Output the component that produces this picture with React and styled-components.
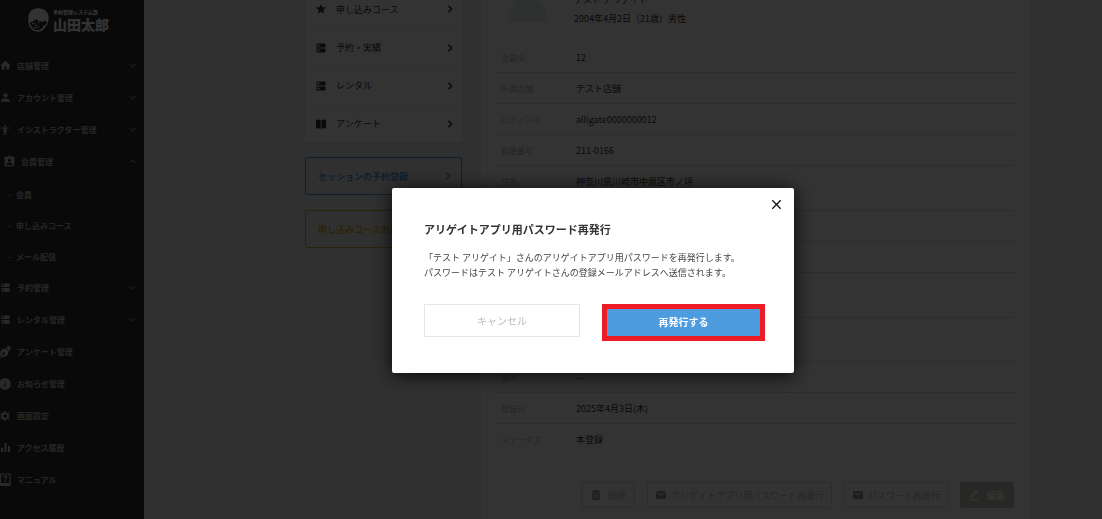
import React from "react";
import styled, { createGlobalStyle, css } from "styled-components";
import {
  MdHome,
  MdPerson,
  MdAccessibility,
  MdAssignmentInd,
  MdDns,
  MdInfo,
  MdSettings,
  MdEmail,
  MdStar,
} from "react-icons/md";
import { FaPenNib, FaTrashAlt } from "react-icons/fa";

const GlobalStyle = createGlobalStyle`
  *, *::before, *::after { box-sizing: border-box; }
  body {
    margin: 0;
    overflow: hidden;
    background: #f0f0f0;
    color: #333;
    font-family: "Noto Sans CJK JP", sans-serif;
    font-size: 9px;
  }
  button { font-family: inherit; cursor: pointer; }
  a { color: inherit; text-decoration: none; }
  ul { list-style: none; margin: 0; padding: 0; }
  svg { display: block; flex: none; }
`;

const Page = styled.div`
  display: flex;
  height: 100vh;
  overflow: hidden;
`;

/* ---------- sidebar ---------- */

const Sidebar = styled.aside`
  flex: 0 0 144px;
  background: #303030;
  color: #ccc;
`;

const Logo = styled.a`
  display: flex;
  align-items: center;
  gap: 4px;
  height: 50px;
  padding: 0 0 10px 28px;
  color: #fff;
`;

const LogoText = styled.span`
  display: flex;
  flex-direction: column;
  font-weight: 900;
`;

const LogoSmall = styled.span`
  font-size: 5px;
  line-height: 8px;
`;

const LogoLarge = styled.span`
  font-size: 14px;
  line-height: 17px;
`;

const MenuItem = styled.a`
  display: flex;
  align-items: center;
  gap: 7px;
  height: 32px;
  padding: 0 8px 0 ${(p) => (p.$open ? 4 : 0)}px;
  border-bottom: 1px solid #3a3a3a;
  font-size: 8px;
  font-weight: 700;
`;

const MenuIcon = styled.span`
  display: flex;
  justify-content: center;
  width: 10px;
`;

const MenuLabel = styled.span`
  flex: 1;
  color: #bbb;
`;

const MenuChevron = styled.span`
  color: #999;
`;

const SubMenu = styled.ul`
  padding-top: 1px;
`;

const SubItem = styled.a`
  display: flex;
  align-items: center;
  gap: 5px;
  height: 31px;
  padding-left: 8px;
  border-bottom: 1px solid #3a3a3a;
  color: #bbb;
  font-size: 8px;
  font-weight: 700;
`;

/* ---------- main columns ---------- */

const Main = styled.main`
  flex: 1;
  min-width: 0;
  display: flex;
  align-items: flex-start;
  gap: 19px;
  margin-top: -10px;
  padding: 0 73px 0 161px;
`;

const SideColumn = styled.div`
  flex: 0 0 157px;
  display: flex;
  flex-direction: column;
  gap: 15px;
`;

const NavCard = styled.nav`
  background: #fff;
  box-shadow: 0 1px 2px rgba(0, 0, 0, 0.06);
`;

const NavRow = styled.a`
  display: flex;
  align-items: center;
  gap: 9px;
  height: 38px;
  padding: 0 8px 0 10px;
  font-size: 9px;

  & + & {
    border-top: 1px solid #f2f2f2;
  }
`;

const NavLabel = styled.span`
  flex: 1;
`;

const ActionLink = styled.a`
  display: flex;
  align-items: center;
  justify-content: space-between;
  height: 38px;
  padding: 0 9px 0 12px;
  border: 1px solid ${(p) => p.$color};
  border-radius: 2px;
  color: ${(p) => p.$color};
  font-size: 9px;
  font-weight: 700;
`;

const DetailCard = styled.section`
  flex: 1;
  min-width: 0;
  min-height: 560px;
  padding: 0 15px;
  background: #fff;
`;

const Profile = styled.header`
  display: flex;
  gap: 27px;
  padding: 0 0 14px 12px;
  line-height: 19px;
`;

const Avatar = styled.div`
  width: 39px;
  height: 25px;
  margin-top: 7px;
  border-radius: 20px 20px 2px 2px;
  background: #ecf4f4;
`;

const ProfileLine = styled.div`
  font-size: 9px;
`;

const DetailTable = styled.table`
  width: 100%;
  border-collapse: separate;
  border-spacing: 0;
  line-height: 13px;
`;

const cell = css`
  height: ${(p) => p.$height || 31}px;
  padding: 9px 5px 8px;
  border-bottom: 1px solid ${(p) => (p.$last ? "transparent" : "#dcdcdc")};
  text-align: left;
  vertical-align: top;
`;

const LabelCell = styled.th`
  ${cell}
  width: 75px;
  color: #b8b8b8;
  font-size: 8px;
  font-weight: 400;
`;

const ValueCell = styled.td`
  ${cell}
  font-size: 9px;
`;

const ButtonBar = styled.div`
  display: flex;
  justify-content: flex-end;
  gap: 12px;
  padding-top: 27px;
`;

const BarButton = styled.button`
  display: flex;
  align-items: center;
  justify-content: center;
  gap: ${(p) => (p.$compact ? 4 : 7)}px;
  min-width: 54px;
  height: 26px;
  padding: 0 7px;
  border: 1px solid ${(p) => (p.$filled ? "#c4c2b8" : "#dcdcdc")};
  border-radius: 2px;
  background: ${(p) => (p.$filled ? "#c4c2b8" : "#fff")};
  color: ${(p) => (p.$filled ? "#fff" : "#bbb")};
  font-size: 9px;
  font-weight: ${(p) => (p.$filled ? 700 : 400)};
  white-space: nowrap;

  svg {
    color: ${(p) => (p.$filled ? "#fff" : "#92969e")};
  }
`;

/* ---------- dialog ---------- */

const Overlay = styled.div`
  position: fixed;
  inset: 0;
  display: flex;
  align-items: center;
  justify-content: center;
  padding: 42px 0 0 84px;
  background: rgba(0, 0, 0, 0.8);
`;

const Dialog = styled.div`
  display: flex;
  flex-direction: column;
  width: 402px;
  padding: 11px 29px 32px 32px;
  border-radius: 2px;
  background: #fff;
  box-shadow: 0 2px 20px rgba(0, 0, 0, 0.9);
`;

const CloseButton = styled.button`
  align-self: flex-end;
  margin-right: -17px;
  padding: 0;
  border: 0;
  background: none;
  color: #111;
`;

const DialogTitle = styled.h2`
  margin: 10px 0 11px;
  font-size: 11px;
  font-weight: 700;
  line-height: 19px;
`;

const DialogText = styled.p`
  margin: 0 0 24px;
  color: #444;
  font-size: 9px;
  line-height: 15px;
`;

const DialogActions = styled.div`
  display: flex;
  align-items: flex-start;
  gap: 22px;
`;

const DialogButton = styled.button`
  flex: 1;
  height: 33px;
  padding: 0;
  border: 1px solid #e6e6e6;
  background: #fff;
  color: #bbb;
  font-size: 10px;
`;

const ConfirmButton = styled(DialogButton)`
  flex: 0 0 163px;
  height: 37px;
  padding-bottom: 3px;
  border: 5px solid #ee1c25;
  background: #4d9ce0;
  color: #fff;
  font-weight: 700;
`;

/* ---------- drawings ---------- */

const LogoFace = () => (
  <svg width="21" height="24" viewBox="0 0 63 72" fill="none" aria-hidden="true">
    <path d="M1 30C1 12 13 1 31 1s31 12 31 29c0 12-4 22-10 27-4 9-12 14-22 14C15 71 4 60 2 46c-1-5-1-10-1-16Z" fill="currentColor" />
    <path d="M6 42c8-1 14-4 19-10 4 6 11 9 22 9 1-4 9-3 9 3 0 5-4 8-8 8-3 8-10 15-19 15C17 67 7 57 6 42Z" fill="#303030" />
    <circle cx="14" cy="46" r="2.500" fill="currentColor" />
    <circle cx="32" cy="43" r="2.500" fill="currentColor" />
    <path d="M22 45v7h4M15 57c5 5 13 4 18-2" stroke="currentColor" strokeWidth="2.500" strokeLinecap="round" />
  </svg>
);

const chevronPaths = { right: "M3 1l4 4-4 4", down: "M1 3l4 4 4-4", up: "M1 7l4-4 4 4" };

const Chevron = ({ dir = "right", size = 8, width = 2 }) => (
  <svg width={size} height={size} viewBox="0 0 10 10" fill="none" stroke="currentColor" strokeWidth={width} aria-hidden="true">
    <path d={chevronPaths[dir]} />
  </svg>
);

const BarsIcon = () => (
  <svg width="11" height="11" viewBox="0 0 11 11" fill="currentColor" aria-hidden="true">
    <path d="M1 6h2v4H1zM4.500 1h2v9h-2zM8 4h2v6H8z" />
  </svg>
);

const ManualIcon = () => (
  <svg width="12" height="14" viewBox="0 0 12 14" fill="none" aria-hidden="true">
    <path d="M1.500 12V2q0-1 1-1h8.500v9.500H2" stroke="currentColor" strokeWidth="1.200" />
    <path d="M1 10.500h10.500V13H2q-1 0-1-1z" fill="currentColor" />
    <path d="M4.700 4.200q0-1.300 1.500-1.300t1.500 1.300c0 1-1.500 1-1.500 2.200M6.200 7.500v1.200" stroke="currentColor" strokeWidth="1.200" />
  </svg>
);

const BookIcon = () => (
  <svg width="12" height="12" viewBox="0 0 12 12" fill="currentColor" aria-hidden="true">
    <path d="M1 2q2.500-1 4.600.3v8.500Q3.500 9.700 1 10.500zM11 2Q8.500 1 6.400 2.300v8.500q2.100-1.100 4.600-.3z" />
  </svg>
);

const EditIcon = () => (
  <svg width="10" height="12" viewBox="0 0 10 12" fill="none" aria-hidden="true">
    <path d="M1 9l.6-2.800L6.500.9q.6-.6 1.200 0l.8.8q.6.600 0 1.200L3.700 8.200z" fill="currentColor" />
    <path d="M2.600 7.200l3.900-4.200" stroke="#c4c2b8" strokeWidth=".7" />
    <path d="M1 11h8" stroke="currentColor" strokeWidth="1.300" />
  </svg>
);

const CloseIcon = () => (
  <svg width="11" height="11" viewBox="0 0 11 11" stroke="currentColor" strokeWidth="1.300" aria-hidden="true">
    <path d="M1.300 1.300l8.400 8.400M9.700 1.300l-8.400 8.400" />
  </svg>
);

/* ---------- data ---------- */

const menu = [
  { label: "店舗管理", icon: <MdHome size={13} />, chevron: "down" },
  { label: "アカウント管理", icon: <MdPerson size={13} />, chevron: "down" },
  { label: "インストラクター管理", icon: <MdAccessibility size={12} />, chevron: "down" },
  {
    label: "会員管理",
    icon: <MdAssignmentInd size={13} />,
    chevron: "up",
    children: ["会員", "申し込みコース", "メール配信"],
  },
  { label: "予約管理", icon: <MdDns size={11} />, chevron: "down" },
  { label: "レンタル管理", icon: <MdDns size={11} />, chevron: "down" },
  { label: "アンケート管理", icon: <FaPenNib size={12} /> },
  { label: "お知らせ管理", icon: <MdInfo size={14} /> },
  { label: "画面設定", icon: <MdSettings size={12} /> },
  { label: "アクセス履歴", icon: <BarsIcon /> },
  { label: "マニュアル", icon: <ManualIcon /> },
];

const memberNav = [
  { label: "申し込みコース", icon: <MdStar size={12} /> },
  { label: "予約・実績", icon: <MdDns size={12} /> },
  { label: "レンタル", icon: <MdDns size={12} /> },
  { label: "アンケート", icon: <BookIcon /> },
];

const details = [
  { label: "会員ID", value: "12" },
  { label: "所属店舗", value: "テスト店舗" },
  { label: "ログインID", value: "alligate0000000012" },
  { label: "郵便番号", value: "211-0166" },
  { label: "住所", value: "神奈川県川崎市中原区市ノ坪", height: 45 },
  {},
  {},
  { height: 45 },
  { height: 44 },
  { label: "備考", value: "---" },
  { label: "登録日", value: "2025年4月3日(木)" },
  { label: "ステータス", value: "本登録" },
];

export default function App() {
  return (
    <>
      <GlobalStyle />
      <Page>
        <Sidebar>
          <Logo href="#">
            <LogoFace />
            <LogoText>
              <LogoSmall>予約管理システム部</LogoSmall>
              <LogoLarge>山田太郎</LogoLarge>
            </LogoText>
          </Logo>
          <ul>
            {menu.map((m) => (
              <li key={m.label}>
                <MenuItem href="#" $open={!!m.children}>
                  <MenuIcon>{m.icon}</MenuIcon>
                  <MenuLabel>{m.label}</MenuLabel>
                  {m.chevron && (
                    <MenuChevron>
                      <Chevron dir={m.chevron} size={7} width={1.5} />
                    </MenuChevron>
                  )}
                </MenuItem>
                {m.children && (
                  <SubMenu>
                    {m.children.map((c) => (
                      <li key={c}>
                        <SubItem href="#">
                          <span>-</span>
                          {c}
                        </SubItem>
                      </li>
                    ))}
                  </SubMenu>
                )}
              </li>
            ))}
          </ul>
        </Sidebar>

        <Main>
          <SideColumn>
            <NavCard>
              {memberNav.map((n) => (
                <NavRow href="#" key={n.label}>
                  {n.icon}
                  <NavLabel>{n.label}</NavLabel>
                  <Chevron />
                </NavRow>
              ))}
            </NavCard>
            <ActionLink href="#" $color="#4d9ce0">
              セッションの予約登録
              <Chevron />
            </ActionLink>
            <ActionLink href="#" $color="#dcb428">
              申し込みコースの追加
              <Chevron />
            </ActionLink>
          </SideColumn>

          <DetailCard>
            <Profile>
              <Avatar />
              <div>
                <ProfileLine>テスト アリゲイト</ProfileLine>
                <ProfileLine>2004年4月2日（21歳）男性</ProfileLine>
              </div>
            </Profile>
            <DetailTable>
              <tbody>
                {details.map((d, i) => (
                  <tr key={i}>
                    <LabelCell scope="row" $height={d.height} $last={i === details.length - 1}>
                      {d.label}
                    </LabelCell>
                    <ValueCell $height={d.height} $last={i === details.length - 1}>
                      {d.value}
                    </ValueCell>
                  </tr>
                ))}
              </tbody>
            </DetailTable>
            <ButtonBar>
              <BarButton type="button">
                <FaTrashAlt size={10} />
                削除
              </BarButton>
              <BarButton type="button" $compact>
                <MdEmail size={12} />
                アリゲイトアプリ用パスワード再発行
              </BarButton>
              <BarButton type="button" $compact>
                <MdEmail size={12} />
                パスワード再発行
              </BarButton>
              <BarButton type="button" $filled>
                <EditIcon />
                編集
              </BarButton>
            </ButtonBar>
          </DetailCard>
        </Main>
      </Page>

      <Overlay>
        <Dialog role="dialog" aria-modal="true" aria-labelledby="dialog-title">
          <CloseButton type="button" aria-label="閉じる">
            <CloseIcon />
          </CloseButton>
          <DialogTitle id="dialog-title">アリゲイトアプリ用パスワード再発行</DialogTitle>
          <DialogText>
            「テスト アリゲイト」さんのアリゲイトアプリ用パスワードを再発行します。
            <br />
            パスワードはテスト アリゲイトさんの登録メールアドレスへ送信されます。
          </DialogText>
          <DialogActions>
            <DialogButton type="button">キャンセル</DialogButton>
            <ConfirmButton type="button">再発行する</ConfirmButton>
          </DialogActions>
        </Dialog>
      </Overlay>
    </>
  );
}
